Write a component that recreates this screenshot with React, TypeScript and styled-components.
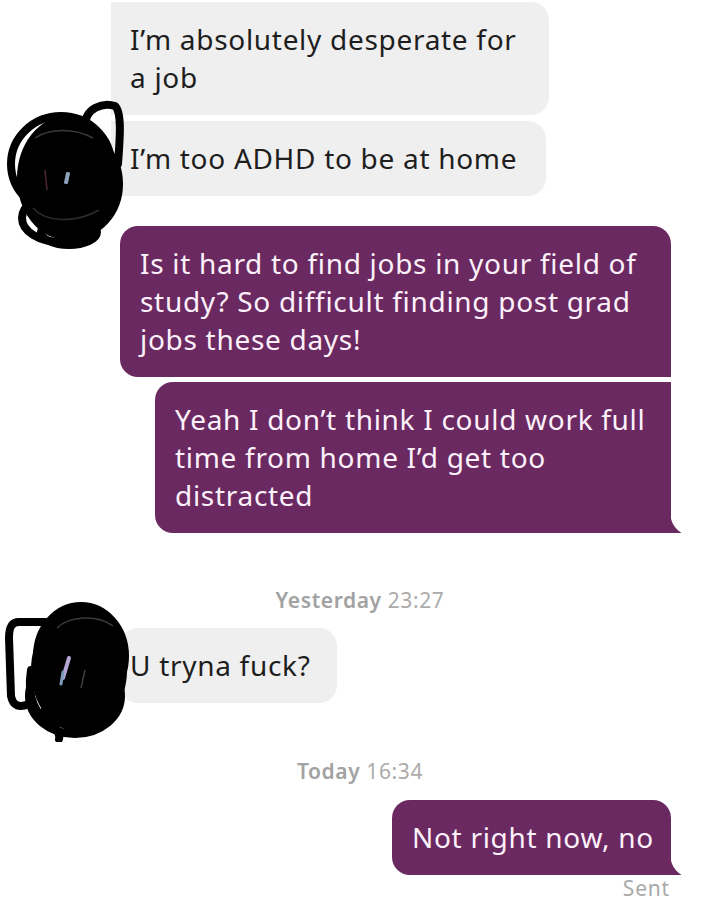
import styled, { createGlobalStyle } from 'styled-components';

const PURPLE = '#6a2960';
const GREY_BUBBLE = '#efefef';

const GlobalStyle = createGlobalStyle`
  html, body {
    margin: 0;
    padding: 0;
    background: #ffffff;
  }
  body {
    font-family: "Noto Sans", "Open Sans", "Liberation Sans", sans-serif;
  }
`;

const Thread = styled.div`
  width: 720px;
  padding-top: 2px;
  display: flex;
  flex-direction: column;
`;

const Row = styled.div<{ $side: 'left' | 'right'; $gap: number }>`
  position: relative;
  display: flex;
  justify-content: ${(p) => (p.$side === 'left' ? 'flex-start' : 'flex-end')};
  margin-top: ${(p) => p.$gap}px;
  padding-left: ${(p) => (p.$side === 'left' ? '111px' : '0')};
  padding-right: ${(p) => (p.$side === 'right' ? '49px' : '0')};
`;

const Bubble = styled.div<{ $mine?: boolean; $width: number; $radius: string; $padLeft?: number }>`
  position: relative;
  box-sizing: border-box;
  width: ${(p) => p.$width}px;
  padding: 18px 16px 19px ${(p) => p.$padLeft ?? 20}px;
  border-radius: ${(p) => p.$radius};
  background: ${(p) => (p.$mine ? PURPLE : GREY_BUBBLE)};
  color: ${(p) => (p.$mine ? '#fcf0fa' : '#1e1e1e')};
  font-size: 28px;
  line-height: 38px;
  letter-spacing: 0.7px;
  white-space: pre;
`;

const Tail = styled.svg`
  position: absolute;
  right: -11px;
  bottom: 0;
  width: 12px;
  height: 20px;
`;

const Stamp = styled.div<{ $gap: number }>`
  margin-top: ${(p) => p.$gap}px;
  text-align: center;
  font-size: 21px;
  line-height: 24px;
  letter-spacing: 0.6px;
  color: #ababab;
`;

const StampDay = styled.span`
  font-weight: 600;
  color: #a2a2a2;
  margin-right: 6px;
`;

const Status = styled.div`
  margin-top: 2px;
  padding-right: 50px;
  text-align: right;
  font-size: 21px;
  line-height: 22px;
  letter-spacing: 0.8px;
  color: #a9a9a9;
`;

const AvatarSpot = styled.div<{ $top: number; $w: number; $h: number }>`
  position: absolute;
  left: 5px;
  top: ${(p) => p.$top}px;
  width: ${(p) => p.$w}px;
  height: ${(p) => p.$h}px;
  z-index: 2;
`;

function TailMark() {
  return (
    <Tail viewBox="0 0 12 20">
      <path d="M0 0 C1 9 4 15 11.5 20 L0 20 Z" fill={PURPLE} />
    </Tail>
  );
}

function ScribbleOne() {
  return (
    <svg width="120" height="150" viewBox="0 0 120 150">
      <g fill="none" stroke="#000" strokeWidth="8" strokeLinecap="round">
        <ellipse cx="56" cy="64" rx="50" ry="48" />
        <path d="M80 26 C80 8 98 2 110 6 C117 12 115 38 113 64" />
        <ellipse cx="66" cy="84" rx="48" ry="52" />
        <ellipse cx="55" cy="118" rx="38" ry="24" />
        <ellipse cx="64" cy="132" rx="28" ry="13" />
        <path d="M20 60 C15 90 20 110 40 125" />
      </g>
      <ellipse cx="62" cy="78" rx="50" ry="62" fill="#000" />
      <path d="M30 38 C45 28 70 28 88 38" stroke="#3a3a3a" strokeWidth="1.5" fill="none" />
      <path d="M28 108 C40 122 70 124 94 110" stroke="#2c2c2c" strokeWidth="1.5" fill="none" />
      <rect x="60" y="72" width="4" height="12" rx="1" fill="#8ea3bd" transform="rotate(12 62 78)" />
      <path d="M40 70 L42 90" stroke="#4a2a30" strokeWidth="1.5" />
    </svg>
  );
}

function ScribbleTwo() {
  return (
    <svg width="124" height="142" viewBox="0 0 124 142">
      <g fill="none" stroke="#000" strokeWidth="8" strokeLinecap="round">
        <path d="M40 22 L14 22 C6 22 4 28 4 38 L6 96 C8 106 14 108 24 104" />
        <ellipse cx="76" cy="56" rx="44" ry="50" />
        <ellipse cx="70" cy="96" rx="46" ry="38" />
        <path d="M40 110 C48 125 56 132 54 139" />
        <path d="M26 70 C22 95 28 115 50 126" />
      </g>
      <ellipse cx="74" cy="70" rx="48" ry="62" fill="#000" />
      <path d="M52 28 C64 16 92 14 108 26" stroke="#3a3a3a" strokeWidth="1.5" fill="none" />
      <path d="M64 58 L58 78" stroke="#b6a6d6" strokeWidth="4" strokeLinecap="round" />
      <path d="M58 72 L56 84" stroke="#7d9ab8" strokeWidth="3" strokeLinecap="round" />
      <path d="M80 70 L76 88" stroke="#3d3d3d" strokeWidth="1.5" />
    </svg>
  );
}

export default function App() {
  return (
    <>
      <GlobalStyle />
      <Thread>
        <Row $side="left" $gap={0}>
          <Bubble $width={438} $radius="0 18px 18px 0" $padLeft={19}>
            {'I’m absolutely desperate for\na job'}
          </Bubble>
        </Row>
        <Row $side="left" $gap={6}>
          <AvatarSpot $top={-21} $w={120} $h={150}>
            <ScribbleOne />
          </AvatarSpot>
          <Bubble $width={435} $radius="0 18px 18px 0" $padLeft={19}>
            I’m too ADHD to be at home
          </Bubble>
        </Row>

        <Row $side="right" $gap={30}>
          <Bubble $mine $width={551} $radius="18px 18px 0 18px">
            {'Is it hard to find jobs in your field of\nstudy? So difficult finding post grad\njobs these days!'}
          </Bubble>
        </Row>
        <Row $side="right" $gap={5}>
          <Bubble $mine $width={516} $radius="18px 0 0 18px">
            {'Yeah I don’t think I could work full\ntime from home I’d get too\ndistracted'}
            <TailMark />
          </Bubble>
        </Row>

        <Stamp $gap={55}>
          <StampDay>Yesterday</StampDay>23:27
        </Stamp>

        <Row $side="left" $gap={16}>
          <AvatarSpot $top={-28} $w={124} $h={142}>
            <ScribbleTwo />
          </AvatarSpot>
          <Bubble $width={217} $radius="18px" $padLeft={10} style={{ marginLeft: 9 }}>
            U tryna fuck?
          </Bubble>
        </Row>

        <Stamp $gap={56}>
          <StampDay>Today</StampDay>16:34
        </Stamp>

        <Row $side="right" $gap={17}>
          <Bubble $mine $width={279} $radius="18px 18px 0 18px">
            Not right now, no
            <TailMark />
          </Bubble>
        </Row>
        <Status>Sent</Status>
      </Thread>
    </>
  );
}
